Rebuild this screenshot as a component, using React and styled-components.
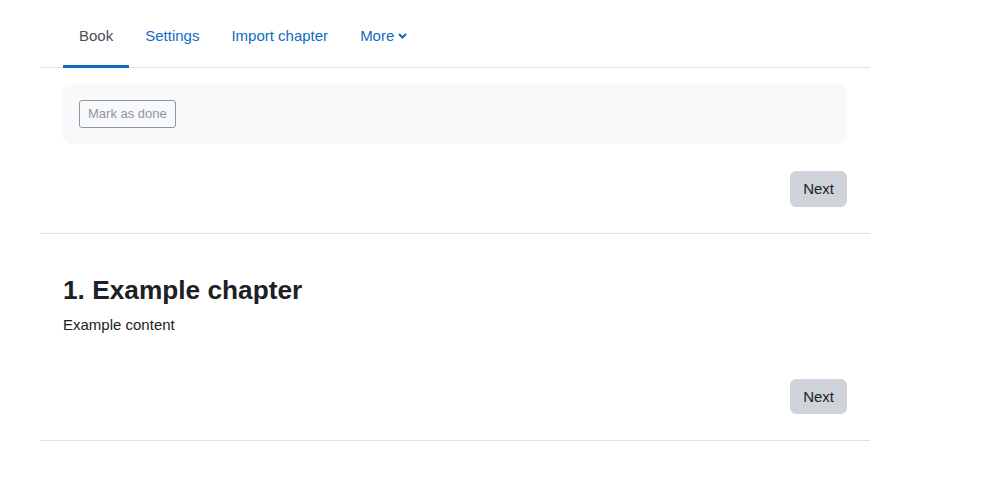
import React from "react";
import styled, { createGlobalStyle } from "styled-components";

const GlobalStyle = createGlobalStyle`
  body {
    margin: 0;
    background: #ffffff;
    font-family: "Liberation Sans", Arial, sans-serif;
    color: #1d2125;
  }
`;

const Page = styled.div`
  width: 830px;
  margin-left: 40px;
`;

const Nav = styled.ul`
  display: flex;
  list-style: none;
  margin: 0;
  padding: 0 0 0 23px;
  height: 68px;
  border-bottom: 1px solid #dee2e6;
  box-sizing: border-box;
`;

const NavItem = styled.li`
  display: flex;
  align-items: center;
  gap: 4px;
  padding: 5px 16px 0;
  font-size: 15px;
  color: ${(p) => (p.active ? "#495057" : "#0f6cbf")};
  border-bottom: 3px solid ${(p) => (p.active ? "#0f6cbf" : "transparent")};
  margin-bottom: -1px;
  cursor: pointer;
`;

const Section = styled.div`
  padding: 0 23px;
  border-bottom: 1px solid #dee2e6;
`;

const CompletionBox = styled.div`
  margin-top: 16px;
  background: #f8f9fa;
  border-radius: 8px;
  padding: 16px;
`;

const SmallButton = styled.button`
  font-family: inherit;
  font-size: 13px;
  height: 28px;
  line-height: 18px;
  padding: 4px 8px;
  background: transparent;
  color: #8f959e;
  border: 1px solid #8f959e;
  border-radius: 3px;
  display: block;
`;

const ButtonRow = styled.div`
  display: flex;
  justify-content: flex-end;
  padding: ${(p) => p.pad};
`;

const NextButton = styled.button`
  font-family: inherit;
  font-size: 15px;
  line-height: ${(p) => p.lh}px;
  padding: 6px 12px;
  background: #ced4da;
  color: #1d2125;
  border: 1px solid #ced4da;
  border-radius: 6px;
`;

const Heading = styled.h2`
  margin: 41px 0 8px;
  font-size: 26.25px;
  line-height: 31px;
  font-weight: 700;
  color: #1d2125;
`;

const Content = styled.p`
  margin: 0;
  font-size: 15px;
  line-height: 22px;
`;

function Chevron() {
  return (
    <svg width="9" height="6" viewBox="0 0 9 6" style={{ marginTop: 2 }}>
      <path d="M1 1l3.5 3.5L8 1" fill="none" stroke="#0f6cbf" strokeWidth="2" />
    </svg>
  );
}

export default function App() {
  return (
    <>
      <GlobalStyle />
      <Page>
        <Nav>
          <NavItem active>Book</NavItem>
          <NavItem>Settings</NavItem>
          <NavItem>Import chapter</NavItem>
          <NavItem>
            More <Chevron />
          </NavItem>
        </Nav>
        <Section>
          <CompletionBox>
            <SmallButton>Mark as done</SmallButton>
          </CompletionBox>
          <ButtonRow pad="27px 0 26px">
            <NextButton lh={22}>Next</NextButton>
          </ButtonRow>
        </Section>
        <Section>
          <Heading>1. Example chapter</Heading>
          <Content>Example content</Content>
          <ButtonRow pad="43px 0 26px">
            <NextButton lh={21}>Next</NextButton>
          </ButtonRow>
        </Section>
      </Page>
    </>
  );
}
